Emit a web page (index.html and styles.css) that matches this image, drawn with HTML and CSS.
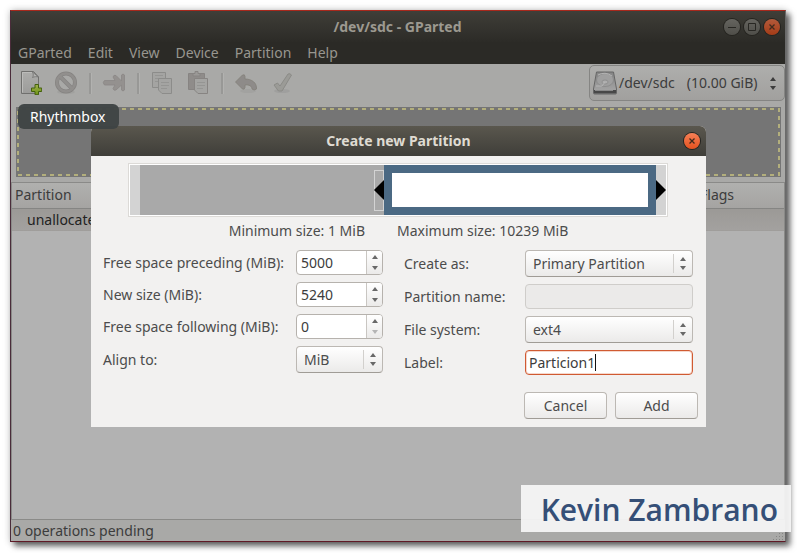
FILE: index.html
```html
<!DOCTYPE html>
<html lang="en">
<head>
<meta charset="utf-8">
<title>/dev/sdc - GParted</title>
<link rel="stylesheet" href="styles.css">
</head>
<body>
<svg class="defs" aria-hidden="true">
  <defs>
    <linearGradient id="page" x1="0" y1="0" x2="0" y2="1"><stop offset="0" stop-color="#adadab"/><stop offset="1" stop-color="#9c9c9a"/></linearGradient>
    <linearGradient id="plus" x1="0" y1="0" x2="0" y2="1"><stop offset="0" stop-color="#9fb04e"/><stop offset="1" stop-color="#6f9416"/></linearGradient>
    <linearGradient id="disk" x1="0" y1="0" x2="0" y2="1"><stop offset="0" stop-color="#858585"/><stop offset="1" stop-color="#a8a8a8"/></linearGradient>
    <symbol id="updown" viewBox="0 0 6 13"><path d="M0 4 3 0 6 4ZM0 9 3 13 6 9Z" fill="currentColor"/></symbol>
    <symbol id="cross" viewBox="0 0 16 16"><path d="M5.500 5.500 10.500 10.500M10.500 5.500 5.500 10.500" stroke="currentColor" stroke-width="1.300" fill="none"/></symbol>
  </defs>
</svg>
<main class="window">
  <header class="titlebar">
    <h1>/dev/sdc - GParted</h1>
    <div class="controls">
      <button class="round" aria-label="Minimize"><svg viewBox="0 0 16 16"><path d="M4 8.500H12" stroke="currentColor"/></svg></button>
      <button class="round" aria-label="Maximize"><svg viewBox="0 0 16 16"><path d="M4.500 4.500H11.500V11.500H4.500Z" stroke="currentColor" fill="none"/></svg></button>
      <button class="round close dim" aria-label="Close"><svg><use href="#cross"/></svg></button>
    </div>
  </header>
  <nav class="menubar">
    <button>GParted</button><button>Edit</button><button>View</button><button>Device</button><button>Partition</button><button>Help</button>
  </nav>
  <div class="toolbar">
    <button aria-label="New"><svg viewBox="0 0 24 24">
      <path d="M3.500 .5H15.500L20.500 6V22.500H3.500Z" fill="url(#page)" stroke="#70706e"/>
      <path d="M4.500 1.500H14.500M4.500 1.500V21.500" stroke="#bcbcba" fill="none"/>
      <path d="M14.500 1C15.500 3 15.500 5 14.500 6.500C16.500 5.500 18.500 5.500 20.500 6Z" fill="#b4b4b2" stroke="#70706e" stroke-width=".8"/>
      <path d="M17 13.500H20.500V17H23.700V20.500H20.500V23.700H17V20.500H13.500V17H17Z" fill="url(#plus)" stroke="#43600c"/>
    </svg></button>
    <button aria-label="Delete"><svg viewBox="0 0 24 24"><ellipse cx="12" cy="21" rx="9" ry="2" fill="#999997" opacity=".5"/><g fill="none"><circle cx="12" cy="11.500" r="9" stroke="#868482" stroke-width="4"/><path d="M6 5.500 18 17.500" stroke="#868482" stroke-width="4"/><circle cx="12" cy="11.500" r="9" stroke="#918f8d" stroke-width="2.600"/><path d="M6 5.500 18 17.500" stroke="#918f8d" stroke-width="2.600"/></g></svg></button>
    <span class="sep"></span>
    <button aria-label="Resize/Move"><svg viewBox="0 0 24 24"><path d="M2.500 9.500H13L11 6Q11.500 3.500 14 4.500L19.500 10V4Q21 2 22.500 4V19Q21 21 19.500 19V14L14 19Q11.500 20 11 17.500L13 14H2.500Q0 11.500 2.500 9.500Z" fill="#94918f" stroke="#8a8785" stroke-width=".8"/></svg></button>
    <span class="sep"></span>
    <button aria-label="Copy"><svg viewBox="0 0 24 24"><g fill="#a4a4a2" stroke="#8c8c8a"><path d="M2.500 1.500H15.500V16.500H2.500Z"/><path d="M5 4.500H13M5 7.500H12M5 10.500H8" stroke="#959593"/><path d="M8.500 7.500H21.500V22.500H12L8.500 19Z"/><path d="M11 11.500H19M11 14.500H19M11 17.500H17" stroke="#959593"/></g></svg></button>
    <button aria-label="Paste"><svg viewBox="0 0 24 24"><g stroke="#878482"><path d="M2.500 2.500H18.500V18.500H2.500Z" fill="#8f8c8a"/><path d="M7 5V2.500H9V.5H12V2.500H14V5Z" fill="#9b9997"/><path d="M8.500 7.500H21.500V22.500H12L8.500 19Z" fill="#a4a4a2"/><path d="M11 11.500H19M11 14.500H19M11 17.500H17" stroke="#959593"/></g></svg></button>
    <span class="sep"></span>
    <button aria-label="Undo"><svg viewBox="0 0 24 24"><ellipse cx="14" cy="20" rx="8" ry="2" fill="#999997" opacity=".4"/><path d="M1.500 11 8.500 4Q11 3 11 5.500V8C18 8 23 12 22.500 18Q20 20 18 18C18 15 15 13.500 11 14V16.500Q10.500 19 8.500 18Z" fill="#8e8b89" stroke="#838078" stroke-width=".8"/></svg></button>
    <button aria-label="Apply"><svg viewBox="0 0 24 24"><ellipse cx="12" cy="20" rx="8" ry="2" fill="#999997" opacity=".6"/><path d="M4 14 7.500 12 10 15 18 3Q20 2 21.500 4L12 20H8.500Z" fill="#9b9b97" stroke="#8b8b87"/></svg></button>
    <button class="device" aria-label="Device">
      <svg class="disk" viewBox="0 0 24 24"><path d="M3.500 1H20.500L23.500 18V22Q23.500 23 22.500 23H1.500Q.5 23 .5 22V18Z" fill="url(#disk)" stroke="#666"/><path d="M1 19H23V22.500H1Z" fill="#484848"/><path d="M2 19.500H20" stroke="#8a8a8a"/><ellipse cx="12" cy="9" rx="8.500" ry="6.500" fill="#9f9f9f" stroke="#858585" stroke-width=".7"/><ellipse cx="12" cy="11" rx="3" ry="2" fill="#aeaeae" stroke="#858585" stroke-width=".7"/><path d="M3 15 9 15 12 11M5 4Q12 0 19 5" stroke="#b5b5b5" fill="none"/></svg>
      <span>/dev/sdc</span><span class="capacity">(10.00 GiB)</span>
      <svg class="updown"><use href="#updown"/></svg>
    </button>
  </div>
  <div class="visual"><svg><rect x="2" y="2" class="dash"/></svg></div>
  <div class="listing">
    <table>
      <thead><tr><th class="name">Partition</th><th></th><th class="flags">Flags</th></tr></thead>
      <tbody><tr><td>unallocated</td><td></td><td></td></tr></tbody>
    </table>
  </div>
  <footer class="status"><span>0 operations pending</span>
    <svg viewBox="0 0 12 12"><path d="M9 1.500H11M6 4.500H11M3 7.500H11M0 10.500H11" stroke="#868684" stroke-dasharray="1 2"/></svg>
  </footer>

  <div class="tooltip" role="tooltip">Rhythmbox</div>

  <section class="dialog" role="dialog" aria-labelledby="dialog-title">
    <header class="dialog-title"><h2 id="dialog-title">Create new Partition</h2>
      <button class="round close" aria-label="Close dialog"><svg><use href="#cross"/></svg></button></header>
    <form class="dialog-body">
      <div class="sizer">
        <span class="margin"></span>
        <span class="before"><span class="grip"><svg viewBox="0 0 10 20"><path d="M10 0V20L0 10Z"/></svg></span></span>
        <span class="part"></span>
        <span class="margin end"><svg viewBox="0 0 10 20"><path d="M0 0V20L10 10Z"/></svg></span>
      </div>
      <div class="limits"><span>Minimum size: 1 MiB</span><span>Maximum size: 10239 MiB</span></div>
      <div class="columns">
        <div class="fields left">
          <label for="preceding">Free space preceding (MiB):</label>
          <div class="field spin"><input id="preceding" type="text" value="5000"><div class="steps"><button type="button" aria-label="Increase"></button><button type="button" class="down" aria-label="Decrease"></button></div></div>
          <label for="size">New size (MiB):</label>
          <div class="field spin"><input id="size" type="text" value="5240"><div class="steps"><button type="button" aria-label="Increase"></button><button type="button" class="down" aria-label="Decrease"></button></div></div>
          <label for="following">Free space following (MiB):</label>
          <div class="field spin"><input id="following" type="text" value="0"><div class="steps"><button type="button" aria-label="Increase"></button><button type="button" class="down" aria-label="Decrease" disabled></button></div></div>
          <label for="align">Align to:</label>
          <div class="combo"><select id="align"><option>MiB</option></select><span class="arrows"><svg class="updown"><use href="#updown"/></svg></span></div>
        </div>
        <div class="fields right">
          <label for="kind">Create as:</label>
          <div class="combo"><select id="kind"><option>Primary Partition</option></select><span class="arrows"><svg class="updown"><use href="#updown"/></svg></span></div>
          <label for="pname">Partition name:</label>
          <div class="field off"><input id="pname" type="text" disabled></div>
          <label for="fs">File system:</label>
          <div class="combo"><select id="fs"><option>ext4</option></select><span class="arrows"><svg class="updown"><use href="#updown"/></svg></span></div>
          <label for="label">Label:</label>
          <div class="field active"><input id="label" type="text" value="Particion1"><span class="caret"></span></div>
        </div>
      </div>
      <div class="actions"><button type="button">Cancel</button><button type="button">Add</button></div>
    </form>
  </section>

  <div class="signature">Kevin Zambrano</div>
</main>
</body>
</html>
```
FILE: styles.css
```css
* { box-sizing: border-box; }
body {
  margin: 0;
  padding: 10px 11px 11px 10px;
  height: 100vh;
  background: #fff;
  font: 14px/20px "Noto Sans", "Open Sans", sans-serif;
  color: #3c3c3c;
}
button, input, select { font: inherit; color: inherit; margin: 0; padding: 0; border: 0; background: none; outline: 0; }
h1, h2 { margin: 0; font: inherit; font-weight: 700; }
svg { display: block; }
.defs { position: absolute; width: 0; height: 0; }

.window {
  position: relative;
  height: 100%;
  display: flex;
  flex-direction: column;
  border: 1px solid;
  border-color: #a8281c #6a6a6a #601a26 #4a2c3a;
  background: #a9a9a7;
  box-shadow: 4px 4px 6px rgba(0, 0, 0, .6), 0 0 7px rgba(0, 0, 0, .22);
}
.titlebar {
  display: flex;
  align-items: center;
  height: 31px;
  background: linear-gradient(#3f3e38, #2c2b27);
  color: #9c9990;
}
.titlebar h1 { flex: 1; padding-left: 60px; text-align: center; }
.controls { display: flex; gap: 4px; padding-right: 5px; }
.round {
  width: 16px;
  height: 16px;
  border-radius: 50%;
  background: linear-gradient(#65645f, #4f4e49);
  box-shadow: 0 0 0 1px #24231f;
  color: #282723;
}
.round svg { width: 16px; height: 16px; fill: none; }
.round.close { background: linear-gradient(#f58057, #e5521f); color: #3f2a1d; }
.round.dim { background: linear-gradient(#b35a3b, #a43c17); }
.menubar { display: flex; gap: 16px; height: 22px; padding-left: 7px; background: #2b2a26; color: #98968f; }

.toolbar { display: flex; align-items: center; height: 38px; padding-left: 1px; }
.toolbar > button { padding: 0 6px; }
.toolbar > button svg { width: 24px; height: 24px; }
.sep { width: 12px; height: 21px; padding-left: 5px; }
.sep::before { content: ""; display: block; width: 2px; height: 100%; background: #989896; border-right: 1px solid #b2b2b0; }
.toolbar > .device {
  display: flex;
  align-items: center;
  width: 196px;
  height: 36px;
  margin-left: auto;
  padding: 0 8px 0 3px;
  border: 1px solid #858583;
  border-radius: 5px;
  background: linear-gradient(#aeaeac, #a1a09e);
}
.disk { margin-right: 2px; }
.capacity { margin-left: 12px; }
.toolbar > button .updown { width: 6px; height: 13px; margin-left: auto; }

.visual { height: 70px; margin: 5px 4px 5px 5px; background: #757575; }
.visual svg { width: 100%; height: 100%; }
.dash { width: calc(100% - 4px); height: calc(100% - 4px); fill: none; stroke: #b3af7c; stroke-width: 2; stroke-dasharray: 4 4; }

.listing { flex: 1; border: 1px solid #8a8a88; background: #b2b2b2; }
table { width: 100%; border-collapse: collapse; table-layout: fixed; }
th, td { padding: 0; text-align: left; font-weight: 400; }
th { height: 25px; padding-left: 3px; background: linear-gradient(#b0b0ae, #a5a4a2); border-bottom: 1px solid #858583; }
td { height: 23px; padding-left: 15px; background: linear-gradient(#9b9996, #a3a19f); color: #222; }
.name { width: 140px; }
.flags { width: 87px; }
.status { display: flex; align-items: center; justify-content: space-between; height: 21px; padding-left: 2px; }
.status svg { width: 12px; height: 12px; align-self: flex-end; }

.tooltip {
  position: absolute;
  left: 7px;
  top: 93px;
  z-index: 2;
  padding: 3px 13px 2px 12px;
  border-radius: 6px;
  background: rgba(62, 68, 68, .96);
  color: #fff;
}

.dialog { position: absolute; left: 80px; right: 79px; top: 115px; background: #f2f1f0; color: #4c4c4c; border-radius: 6px 6px 0 0; }
.dialog-title {
  display: flex;
  align-items: center;
  height: 30px;
  padding-right: 6px;
  border-radius: 6px 6px 0 0;
  background: linear-gradient(#5a574e, #3f3e39);
  color: #dfdbd2;
}
.dialog-title h2 { flex: 1; padding-left: 22px; text-align: center; }
.dialog-body { margin: 0; padding: 7px 8px 8px; }
.sizer { display: flex; height: 54px; margin: 0 30px 0 29px; border: 1px solid #dcdad7; outline: 1px solid #fff; outline-offset: -2px; padding: 1px; }
.margin { width: 10px; background: #d3d3d3; display: flex; align-items: center; }
.margin svg, .grip svg { width: 10px; height: 20px; }
.before { width: 244px; background: #a9a9a9; display: flex; align-items: center; justify-content: flex-end; }
.grip { display: flex; align-items: center; height: 41px; box-shadow: inset 0 0 0 1px #d3d3d3; }
.part { flex: 1; background: #fff; border: 8px solid #4b6983; }
.limits { display: flex; justify-content: center; gap: 32px; height: 33px; padding-top: 4px; }
.columns { display: flex; justify-content: space-between; padding: 0 5px 0 4px; }
.fields { display: grid; gap: 7px 8px; align-items: center; align-content: start; }
.left { grid-template-columns: 1fr 87px; width: 280px; }
.right { grid-template-columns: 1fr 168px; width: 289px; }
label { white-space: nowrap; }
.field { display: flex; height: 25px; border: 1px solid #b6b2ad; border-radius: 4px; background: #fff; overflow: hidden; color: #3c3c3c; }
.field input { flex: 1; min-width: 0; padding-left: 4px; }
.off { background: #ebeae9; border-color: #cfcdca; }
.active { border-color: #d05a32; align-items: center; padding-left: 3px; box-shadow: inset 0 0 0 1px #f6d8cc; }
.active input { flex: none; padding: 0; field-sizing: content; }
.caret { width: 1px; height: 17px; background: #111; }
.steps { display: flex; flex-direction: column; width: 16px; border-left: 1px solid #c9c6c2; background: linear-gradient(#fff, #ebeae9); }
.steps button { flex: 1; display: flex; align-items: center; justify-content: center; }
.steps button::before { content: ""; border: 3px solid transparent; border-top: 0; border-bottom: 4px solid #686868; }
.steps .down::before { border-top: 4px solid #686868; border-bottom: 0; }
.steps .down:disabled::before { border-top-color: #b5b5b5; }
.combo, .actions button {
  display: flex;
  height: 27px;
  border: 1px solid #bcb8b3;
  border-bottom-color: #a09c96;
  border-radius: 4px;
  background: linear-gradient(#fff, #ebeae9);
}
.combo { align-items: center; }
.combo select { flex: 1; min-width: 0; height: 25px; padding-left: 7px; appearance: none; }
.arrows { display: flex; align-items: center; height: 19px; padding: 0 6px; border-left: 1px solid #d2d0cd; pointer-events: none; }
.arrows .updown { width: 6px; height: 13px; color: #686868; }
.actions { display: flex; justify-content: flex-end; gap: 8px; padding-top: 17px; }
.actions button { width: 83px; justify-content: center; align-items: center; }

.signature {
  position: absolute;
  right: -6px;
  bottom: 9px;
  z-index: 3;
  height: 47px;
  padding: 0 13px 0 20px;
  background: rgba(245, 245, 245, .94);
  color: #354f77;
  font: 600 30px/50px "Open Sans", "Noto Sans", sans-serif;
}
```
